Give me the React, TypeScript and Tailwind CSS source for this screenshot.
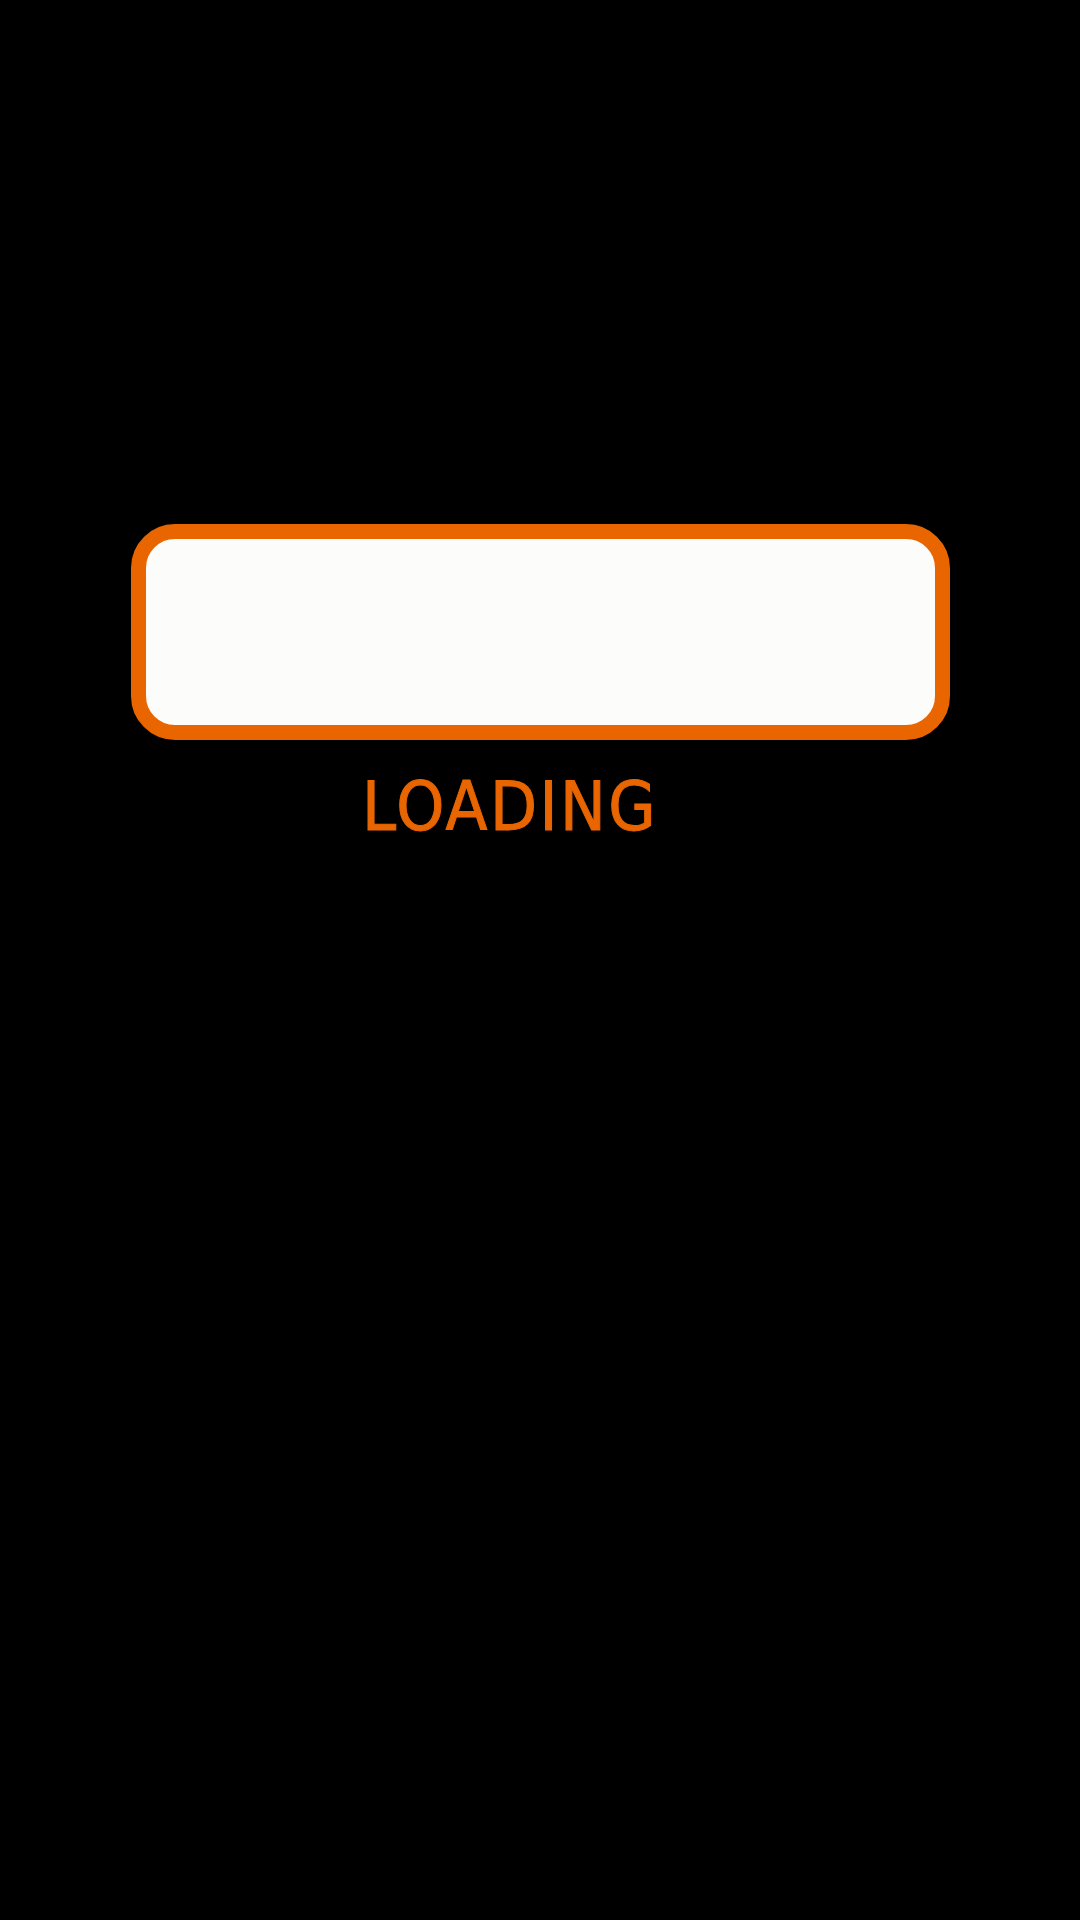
export default function App() {
  return (
    <div className="w-[1080px] h-[1920px] bg-black flex flex-col pt-[524px]">
      <div className="ml-[131px] w-[819px] h-[216px] rounded-[44px] border-[15px] border-[#e86500] bg-[#fcfcfa]" />
      <div
        className="ml-[362px] mt-[33px] text-[68px] leading-none tracking-[2.5px] text-[#e86500] [-webkit-text-stroke:1px_#e86500]"
        style={{ fontFamily: '"DejaVu Sans Condensed", "DejaVu Sans", sans-serif' }}
      >
        LOADING
      </div>
    </div>
  );
}
